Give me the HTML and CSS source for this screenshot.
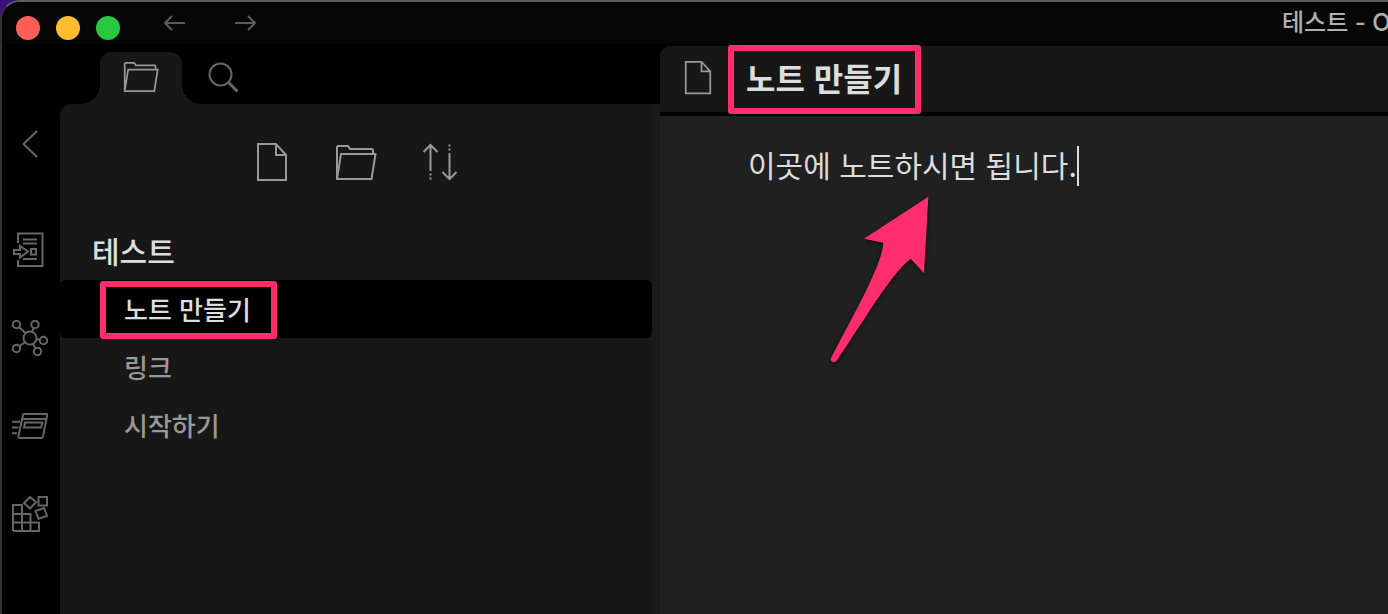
FILE: index.html
```html
<!DOCTYPE html>
<html lang="ko">
<head>
  <meta charset="UTF-8">
  <title>테스트</title>
  <meta name="viewport" content="width=device-width, initial-scale=1.0">
  <link rel="stylesheet" href="styles.css">
</head>
<body>
  <svg class="sprite" aria-hidden="true">
    <symbol id="icon-file" viewBox="0 0 32 40">
      <path d="M2 2h18l10 11v25H2zM20 2v11h10"/>
    </symbol>
    <symbol id="icon-folder" viewBox="0 0 42 37">
      <path d="M2 35V3l1-1h10l2 3h22l1 1v4M6 10h34.5l-4 25H2z"/>
    </symbol>
  </svg>

  <div class="app">
    <header class="titlebar">
      <div class="lights">
        <button class="light close" aria-label="닫기"></button>
        <button class="light minimize" aria-label="최소화"></button>
        <button class="light maximize" aria-label="최대화"></button>
      </div>
      <nav class="history">
        <button aria-label="뒤로">
          <svg width="22" height="16" viewBox="0 0 22 16"><path d="M21 8H1M8 1L1 8l7 7"/></svg>
        </button>
        <button aria-label="앞으로">
          <svg width="22" height="16" viewBox="0 0 22 16"><path d="M1 8h20M14 1l7 7-7 7"/></svg>
        </button>
      </nav>
      <div class="window-title">테스트 - O</div>
    </header>

    <div class="workspace">
      <nav class="ribbon">
        <button class="collapse" aria-label="접기">
          <svg width="16" height="28" viewBox="0 0 16 28"><path d="M15 1L1.500 14 15 27"/></svg>
        </button>
        <button aria-label="빠른 전환">
          <svg width="36" height="36" viewBox="0 0 36 36">
            <path d="M6 11V1.500h24.500V34H6v-6M11 7.500h14M11 11.500h14M11 27h14M19 17h5v5.500h-5zM2 18h6v-4l8 5.500-8 6V22H2z"/>
          </svg>
        </button>
        <button aria-label="그래프 뷰">
          <svg width="36" height="36" viewBox="0 0 36 36">
            <circle cx="18" cy="18" r="6.500"/>
            <circle cx="4.500" cy="4.500" r="3.700"/>
            <circle cx="23" cy="4.500" r="3.700"/>
            <circle cx="31.500" cy="20.500" r="3.700"/>
            <circle cx="4.500" cy="28.500" r="3.700"/>
            <circle cx="25.500" cy="31.500" r="3.700"/>
            <path d="M7 7l6.500 6M21.500 8l-1.500 4M24.500 19l3.500 1M7.500 26l6-4M21 24l2.500 4"/>
          </svg>
        </button>
        <button aria-label="카드">
          <svg width="36" height="36" viewBox="0 0 36 36">
            <path d="M12 6h22.500q1 0 .8 1L31 28.500q-.5 1.500-2 1.500H8q-2 0-1.500-2L11 7q.2-1 1-1zM10 11h24.500M13 14.500h17.500l-1.500 5H12zM0 13.700h8M0 19.500h6.500M0 25.300h5"/>
          </svg>
        </button>
        <button aria-label="플러그인">
          <svg width="36" height="36" viewBox="0 0 36 36">
            <path d="M1 35V9h9v26M1 18h17.500v17M1 26.500h26V35H1M26.500 1H35v8.500h-8.500zM18 1l6 5-6 6.500L12 7zM23.500 15l8.500-3 3 8-8.500 2.700z"/>
          </svg>
        </button>
      </nav>

      <aside class="sidebar">
        <div class="tabs">
          <button class="tab active" aria-label="파일 탐색기">
            <svg width="36" height="32"><use href="#icon-folder"/></svg>
          </button>
          <button class="tab" aria-label="검색">
            <svg width="32" height="32" viewBox="0 0 32 32"><circle cx="13.500" cy="13.500" r="11"/><path class="handle" d="M21.500 21.500l9 9"/></svg>
          </button>
        </div>
        <div class="explorer">
          <div class="toolbar">
            <button aria-label="새 노트">
              <svg width="32" height="40"><use href="#icon-file"/></svg>
            </button>
            <button aria-label="새 폴더">
              <svg width="42" height="37"><use href="#icon-folder"/></svg>
            </button>
            <button aria-label="정렬">
              <svg width="36" height="40" viewBox="0 0 36 40">
                <path d="M8.500 3v26M1.500 10l7-7 7 7M27.500 11v26M20.500 30l7 7 7-7"/>
                <path d="M8.500 31.500v2M8.500 35.500v2M27.500 2.500v2M27.500 6.500v2"/>
              </svg>
            </button>
          </div>
          <h2 class="vault">테스트</h2>
          <ul class="files">
            <li><a class="file active" href="#"><span class="mark">노트 만들기</span></a></li>
            <li><a class="file" href="#">링크</a></li>
            <li><a class="file" href="#">시작하기</a></li>
          </ul>
        </div>
      </aside>

      <main class="pane">
        <div class="pane-header">
          <svg width="28" height="35"><use href="#icon-file"/></svg>
          <h1 class="pane-title mark">노트 만들기</h1>
        </div>
        <div class="editor">
          <p class="line" contenteditable="true" role="textbox" aria-label="노트">이곳에 노트하시면 됩니다.</p>
          <svg class="pointer" width="112" height="180" viewBox="0 0 112 180" aria-hidden="true">
            <path d="M104.300 6.700L40 48.700l19.300 4C59 72 34 117 7.300 167.500c-2 4 3 6.500 5.500 3C41 129 67 84 86.700 68.700L100 83.300z"/>
          </svg>
        </div>
      </main>
    </div>
  </div>
</body>
</html>
```
FILE: styles.css
```css
* {
  box-sizing: border-box;
}

body {
  margin: 0;
  background: linear-gradient(90deg, #3c1278 0, #3c1278 30px, #000 60px);
  color: #dcddde;
  font-family: "Noto Sans CJK KR", "Noto Sans", sans-serif;
}

h1, h2, p, ul {
  margin: 0;
  padding: 0;
}

ul {
  list-style: none;
}

a {
  color: inherit;
  text-decoration: none;
}

button {
  display: flex;
  align-items: center;
  justify-content: center;
  padding: 0;
  border: 0;
  background: none;
  color: inherit;
  cursor: pointer;
}

svg {
  flex: none;
  fill: none;
  stroke: currentColor;
  stroke-width: 2;
}

.sprite {
  position: absolute;
  width: 0;
  height: 0;
}

.app {
  display: flex;
  flex-direction: column;
  min-height: 100vh;
  overflow: hidden;
  background: #000;
  border-top: 2px solid #5c5c5c;
  border-left: 2px solid #333;
  border-top-left-radius: 20px;
}

/* title bar */
.titlebar {
  display: flex;
  align-items: center;
  height: 42px;
  padding-left: 14px;
  background: #060606;
}

.lights {
  display: flex;
  gap: 16px;
  padding-top: 10px;
}

.light {
  width: 24px;
  height: 24px;
  border-radius: 50%;
}

.close {
  background: #ff5f57;
}

.minimize {
  background: #febc2e;
}

.maximize {
  background: #28c840;
}

.history {
  display: flex;
  gap: 48px;
  margin-left: 44px;
  color: #5c5c5c;
}

.window-title {
  width: 106px;
  margin-left: auto;
  overflow: hidden;
  white-space: nowrap;
  color: #b0b0b0;
  font-family: Inter, "Noto Sans CJK KR", sans-serif;
  font-size: 24px;
  font-weight: 500;
  line-height: 42px;
}

.workspace {
  display: flex;
  flex: 1;
}

/* left ribbon */
.ribbon {
  display: flex;
  flex-direction: column;
  flex: none;
  width: 58px;
  padding: 72px 2px 0 0;
  color: #666;
}

.ribbon button {
  height: 88px;
}

.ribbon .collapse {
  height: 56px;
  margin-bottom: 34px;
}

/* sidebar */
.sidebar {
  display: flex;
  flex-direction: column;
  flex: 0 0 600px;
}

.tabs {
  display: flex;
  height: 60px;
  padding: 8px 0 0 40px;
}

.tab {
  position: relative;
  width: 82px;
  padding-bottom: 2px;
  color: #666;
}

.tab .handle {
  stroke-width: 3;
}

.tab.active {
  background: #171717;
  border-radius: 12px 12px 0 0;
  color: #999;
}

.tab.active::before,
.tab.active::after {
  content: "";
  position: absolute;
  bottom: 0;
  width: 20px;
  height: 20px;
}

.tab.active::before {
  right: 100%;
  background: radial-gradient(circle at 0 0, transparent 20px, #171717 20px);
}

.tab.active::after {
  left: 100%;
  background: radial-gradient(circle at 100% 0, transparent 20px, #171717 20px);
}

.explorer {
  flex: 1;
  background: #171717;
  border-right: 8px solid #1a1a1a;
  border-top-left-radius: 12px;
}

.toolbar {
  display: flex;
  justify-content: center;
  gap: 36px;
  height: 116px;
  color: #999;
}

.toolbar button {
  width: 48px;
}

.vault {
  padding-left: 32px;
  font-size: 30px;
  font-weight: 500;
  line-height: 60px;
}

.file {
  display: block;
  padding-left: 64px;
  border-radius: 6px;
  color: #999;
  font-size: 26px;
  font-weight: 500;
  line-height: 58px;
}

.file.active {
  background: #000;
  color: #dcddde;
}

/* note pane */
.pane {
  display: flex;
  flex-direction: column;
  flex: 1;
  min-width: 0;
  padding-top: 2px;
}

.pane-header {
  display: flex;
  align-items: center;
  gap: 34px;
  height: 70px;
  padding: 0 24px 4px;
  background: #171717;
  border-bottom: 4px solid #000;
  border-top-left-radius: 10px;
  color: #999;
}

.pane-title {
  color: #dcddde;
  font-size: 32px;
  font-weight: 700;
  line-height: 60px;
}

.editor {
  position: relative;
  flex: 1;
  padding: 30px 88px;
  background: #202020;
}

.line {
  display: inline-block;
  padding-bottom: 4px;
  border-right: 2px solid #dcddde;
  outline: 0;
  font-size: 30px;
  line-height: 36px;
}

/* highlight frames and arrow */
.mark {
  position: relative;
}

.mark::after {
  content: "";
  position: absolute;
  inset: -9px -26px -12px -24px;
  border: 6px solid #ff2d6c;
  border-radius: 3px;
}

.pane-title::after {
  inset: -2px -19px -7px -18px;
}

.pointer {
  position: absolute;
  top: 74px;
  left: 164px;
  fill: #ff2d6c;
  stroke: none;
  filter: drop-shadow(0 2px 2px #0008);
}
```
